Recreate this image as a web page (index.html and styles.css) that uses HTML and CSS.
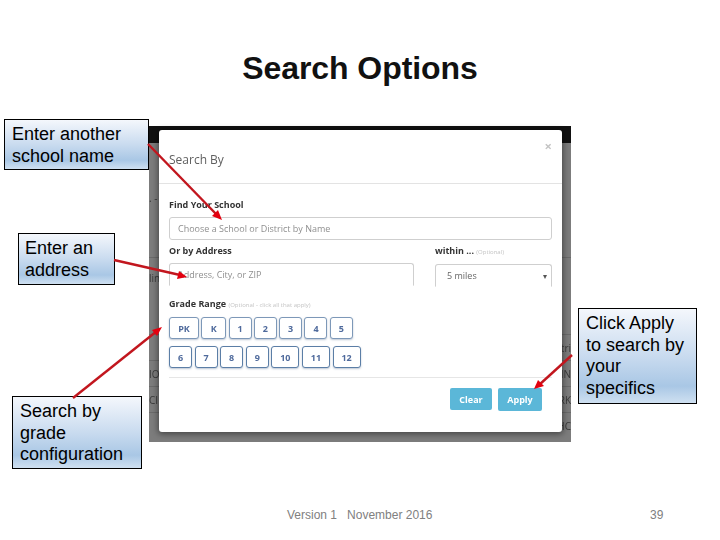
FILE: index.html
```html
<!DOCTYPE html>
<html lang="en">
<head>
<meta charset="utf-8">
<title>Search Options</title>
<link rel="stylesheet" href="styles.css">
</head>
<body>
<main class="slide">
  <h1 class="title">Search Options</h1>

  <section class="shot">
    <div class="shot-bar"></div>
    <div class="bg-row bg-a"><span>. -</span></div>
    <div class="bg-row bg-b"></div>
    <div class="bg-row bg-c"><span>lin</span></div>
    <div class="bg-row bg-d"><span></span><span>tri</span></div>
    <div class="bg-row bg-e"><span>IO</span><span>IN</span></div>
    <div class="bg-row bg-e"><span>CI</span><span>RK</span></div>
    <div class="bg-row bg-e bg-last"><span></span><span>HC</span></div>
  </section>

  <section class="modal">
    <header class="modal-head">
      <h2 class="modal-title">Search By</h2>
      <span class="modal-close">×</span>
    </header>
    <div class="modal-body">
      <label class="lbl lbl-first">Find Your School</label>
      <div class="field">Choose a School or District by Name</div>
      <div class="addr-row">
        <div class="addr-col">
          <label class="lbl">Or by Address</label>
          <div class="field field-open">Address, City, or ZIP</div>
        </div>
        <div class="within-col">
          <label class="lbl">within ... <small class="hint">(Optional)</small></label>
          <div class="field field-open field-select"><span>5 miles</span><span class="caret">▾</span></div>
        </div>
      </div>
      <label class="lbl lbl-grade">Grade Range <small class="hint">(Optional - click all that apply)</small></label>
      <div class="grades grades-one">
        <button class="grade g-pk">PK</button><button class="grade g-k">K</button><button class="grade">1</button><button class="grade">2</button><button class="grade">3</button><button class="grade">4</button><button class="grade">5</button>
      </div>
      <div class="grades grades-two">
        <button class="grade">6</button><button class="grade">7</button><button class="grade">8</button><button class="grade">9</button><button class="grade g-wide">10</button><button class="grade g-wide">11</button><button class="grade g-wide">12</button>
      </div>
    </div>
    <footer class="modal-foot">
      <button class="act act-clear">Clear</button>
      <button class="act act-apply">Apply</button>
    </footer>
  </section>

  <div class="callout c1">Enter another school name</div>
  <div class="callout c2">Enter an address</div>
  <div class="callout c3">Search by grade configuration</div>
  <div class="callout c4">Click Apply to search by your specifics</div>

  <svg class="arrows" width="720" height="540" viewBox="0 0 720 540" aria-hidden="true">
    <g class="shaft">
      <line x1="148" y1="144" x2="218" y2="216"/>
      <line x1="114" y1="260" x2="180" y2="275"/>
      <line x1="73" y1="398" x2="157" y2="331"/>
      <line x1="572" y1="355" x2="539" y2="385"/>
    </g>
    <g class="head">
      <polygon points="222,220 212,216 218,210"/>
      <polygon points="187,277 177,279 179,271"/>
      <polygon points="162,327 157,336 152,330"/>
      <polygon points="534,389 538,380 544,386"/>
    </g>
  </svg>

  <footer class="slide-foot">
    <span class="foot-version">Version 1&nbsp;&nbsp; November 2016</span>
    <span class="foot-page">39</span>
  </footer>
</main>
</body>
</html>
```

FILE: styles.css
```css
* { box-sizing: border-box; }
html, body { margin: 0; padding: 0; background: #fff; }
.slide {
  position: relative;
  width: 720px;
  height: 540px;
  overflow: hidden;
  font-family: "Liberation Sans", Arial, sans-serif;
  color: #000;
}
.title {
  margin: 0;
  padding-top: 50px;
  text-align: center;
  font-size: 32px;
  line-height: 37px;
  font-weight: 700;
  letter-spacing: -0.08px;
  color: #111;
}

/* Backdrop of the embedded screenshot */
.shot {
  position: absolute;
  left: 149px;
  top: 126px;
  width: 422px;
  height: 316px;
  background: #7c7c7c;
  overflow: hidden;
  font-family: "Open Sans", sans-serif;
  font-size: 10px;
  color: #3a3a3a;
  filter: blur(0.3px);
}
.shot-bar { height: 17px; background: #111; }
.bg-row {
  display: flex;
  justify-content: space-between;
  align-items: center;
  border-bottom: 1px solid #6a6a6a;
}
.bg-a { height: 80px; padding-top: 30px; border-bottom: 0; }
.bg-b { height: 35px; }
.bg-c { height: 77px; align-items: flex-start; padding-top: 13px; }
.bg-d { height: 26px; }
.bg-e { height: 26px; }
.bg-last { border-bottom: 0; }

/* Modal */
.modal {
  position: absolute;
  left: 159px;
  top: 130px;
  width: 403px;
  height: 302px;
  background: #fff;
  border-radius: 3px;
  box-shadow: 0 1px 6px 1px rgba(0, 0, 0, 0.45);
  font-family: "Open Sans", sans-serif;
  display: flex;
  flex-direction: column;
  filter: blur(0.3px);
}
.modal-head {
  height: 54px;
  padding: 0 10px;
  border-bottom: 1px solid #e3e3e3;
  display: flex;
  justify-content: space-between;
  align-items: flex-start;
}
.modal-title {
  margin: 22px 0 0;
  font-size: 12px;
  line-height: 16px;
  font-weight: 400;
  color: #5f5f5f;
}
.modal-close {
  margin: 8px 0 0;
  font-size: 13px;
  line-height: 16px;
  color: #c4c4c4;
  font-weight: 700;
}
.modal-body { padding: 0 10px; flex: 1; }
.lbl {
  display: block;
  font-size: 9px;
  line-height: 12px;
  font-weight: 700;
  color: #333;
  margin: 0 0 6px;
}
.lbl-first { padding-top: 15px; }
.hint { font-size: 6px; font-weight: 400; color: #c4c4c4; }
.field {
  height: 23px;
  border: 1px solid #cfcfcf;
  border-radius: 3px;
  padding: 0 8px;
  display: flex;
  align-items: center;
  font-size: 9px;
  color: #8f8f8f;
}
.field-open { border-bottom-color: transparent; border-radius: 3px 3px 0 0; }
.addr-row { display: flex; gap: 21px; margin-top: 5px; }
.addr-col { width: 245px; }
.within-col { flex: 1; }
.field-select { justify-content: space-between; padding: 0 4px 0 11px; color: #666; }
.caret { font-size: 8px; color: #555; }
.lbl-grade { margin: 11px 0 6px; }
.grades { display: flex; }
.grades-one { gap: 2.3px; }
.grades-two { margin-top: 7px; gap: 2.6px; }
.grade {
  width: 23px;
  height: 22px;
  padding: 0;
  background: #fff;
  border: 1px solid #5b7ea6;
  border-radius: 3px;
  box-shadow: 0 1px 2px rgba(60, 90, 130, 0.35);
  font-family: "Open Sans", sans-serif;
  font-size: 9px;
  font-weight: 700;
  color: #4f6a9c;
}
.grades-one .grade { border-color: #7d98b8; }
.g-pk { width: 30px; }
.g-k { width: 25px; }
.g-wide { width: 28px; }
.modal-foot {
  margin: 0 10px;
  height: 55px;
  border-top: 1px solid #e6e6e6;
  padding: 10px 10px 0 0;
  display: flex;
  justify-content: flex-end;
  align-items: flex-start;
  gap: 6px;
}
.act {
  height: 22px;
  padding: 0;
  border: 0;
  border-radius: 2px;
  background: #5bb7d8;
  color: #fff;
  font-family: "Open Sans", sans-serif;
  font-size: 9px;
  font-weight: 700;
}
.act-clear { width: 42px; }
.act-apply { width: 44px; height: 23px; }

/* Callouts */
.callout {
  position: absolute;
  border: 1px solid #000;
  background: linear-gradient(180deg, #f4f7fc 0%, #c9dbef 50%, #a9c7e5 82%, #cfe0f1 100%);
  font-size: 18px;
  line-height: 21.7px;
  color: #000;
}
.c1 { left: 4px; top: 119px; width: 145px; height: 51px; padding: 4px 7px; }
.c2 { left: 18px; top: 233px; width: 97px; height: 52px; padding: 4px 6px; }
.c3 { left: 12px; top: 396px; width: 130px; height: 73px; padding: 4px 7px; }
.c4 { left: 578px; top: 308px; width: 119px; height: 96px; padding: 4px 7px; }

/* Arrows */
.arrows { position: absolute; left: 0; top: 0; pointer-events: none; }
.shaft line { stroke: #c2161e; stroke-width: 2.4; }
.head polygon { fill: #e3000f; }

/* Slide footer */
.slide-foot { font-size: 12px; line-height: 14px; color: #808080; }
.foot-version { position: absolute; left: 287px; top: 508px; }
.foot-page { position: absolute; left: 650px; top: 508px; }
```
